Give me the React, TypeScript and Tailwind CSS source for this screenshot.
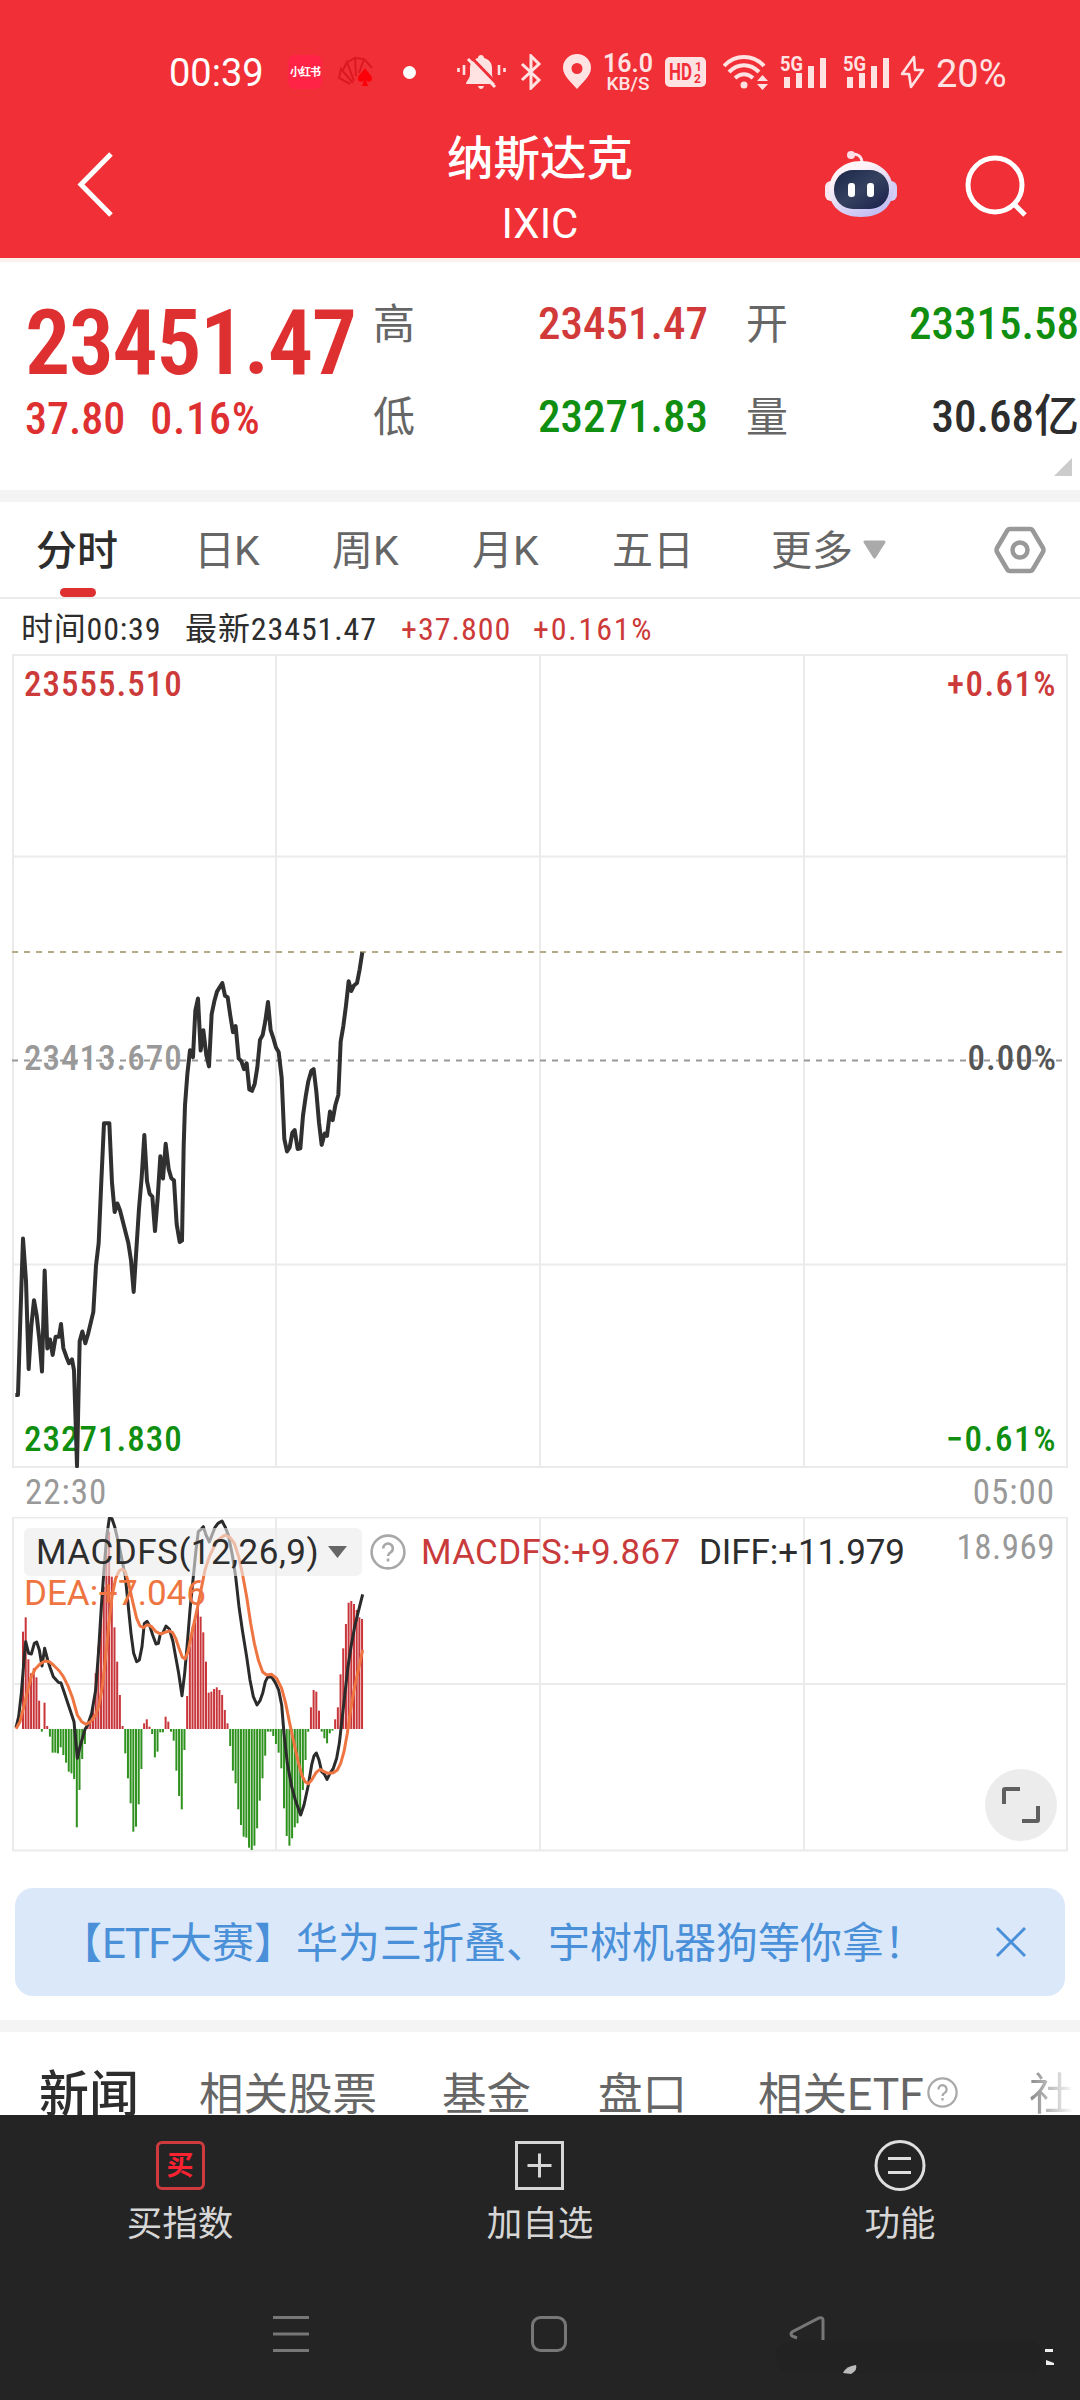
// src/App.tsx
import type { ReactNode } from 'react';
import { clsx } from 'clsx';

// Chart geometry: each series is stored in its own plotting units and scaled by the <g>
const PRICE_LINE =
  '46,1321 54,1321 61,1100 69,867 78,990 86,1246 94,1120 102,1046 110,1090 118,1160 126,1253 134,960 142,1186 150,1160 158,1205 167,1152 177,1152 183,1115 190,1185 199,1210 207,1229 216,1218 222,1250 231,1528 239,1165 247,1137 256,1171 264,1145 280,1080 288,945 296,880 304,700 312,532 328,532 336,705 344,790 352,765 360,785 368,815 385,880 393,930 401,1022 409,900 417,780 425,690 433,566 441,700 449,737 457,745 465,845 473,750 481,628 489,693 497,592 506,665 514,692 522,698 530,825 539,877 546,873 551,600 555,480 562,390 570,320 579,340 586,205 594,170 602,321 610,262 619,335 627,367 635,215 643,178 651,150 667,125 675,162 683,166 691,220 699,268 707,250 716,344 724,352 732,375 740,358 748,434 756,438 764,418 772,370 780,290 788,276 796,235 804,180 812,262 820,285 828,312 836,325 845,400 853,578 861,614 869,602 877,560 884,552 893,607 901,605 909,510 917,455 925,410 934,380 941,375 949,440 957,530 965,595 974,562 981,569 990,498 998,523 1006,480 1015,450 1022,295 1030,250 1038,190 1046,120 1054,148 1062,132 1071,125 1079,85 1087,36';

const DIFF_LINE =
  '48,803 56,770 64,700 72,600 77,545 86,580 94,582 103,550 110,546 118,570 126,618 134,565 143,600 151,625 160,650 175,667 183,669 192,695 207,740 222,785 232,895 240,860 255,808 263,795 275,760 287,690 296,570 304,440 312,330 320,230 328,175 336,176 344,200 358,260 376,350 385,440 393,520 401,580 410,605 418,600 426,560 433,490 441,484 450,500 458,525 468,552 475,550 481,522 489,518 498,498 508,507 519,545 527,590 536,640 546,707 554,640 562,550 570,450 580,350 588,270 595,215 603,208 610,200 618,225 628,246 636,225 645,202 654,190 666,183 675,200 685,225 697,285 707,350 717,440 727,510 740,590 750,660 760,710 771,735 780,722 788,700 796,665 804,650 816,652 826,668 836,690 845,735 852,820 862,910 875,980 886,1020 902,1065 912,1035 925,975 935,915 942,888 949,879 957,900 965,935 973,942 981,958 990,940 1000,925 1010,895 1018,850 1027,770 1036,690 1044,620 1053,560 1064,500 1075,455 1088,403';

const DEA_LINE =
  '48,806 60,785 70,745 82,695 94,650 105,628 120,612 135,603 148,605 160,615 178,633 190,650 205,680 218,715 232,765 245,785 258,793 272,785 287,765 297,735 307,680 317,590 327,490 336,410 347,355 358,332 367,327 376,335 387,375 398,425 410,475 420,498 430,503 442,494 455,500 468,515 482,522 495,517 508,513 518,518 527,535 537,565 547,592 555,597 564,575 572,535 582,490 593,440 603,390 615,330 628,290 643,258 658,237 675,225 690,232 703,250 716,290 728,345 740,410 752,490 763,550 775,600 788,636 800,645 815,643 830,655 845,685 857,730 868,785 880,840 892,895 905,945 915,965 925,971 935,960 948,938 960,928 972,935 985,940 1000,938 1012,930 1022,910 1032,875 1042,820 1052,750 1062,690 1075,630 1088,570';

// MACD histogram, positive above the zero line
const MACD_BARS = [
  292, 335, 209, 167, 182, 155, 85, -8, 79, 9, -23, -71, -71, -73, -55, -78, -101, -128, -133, -150,
  -295, -183, -90, -45, 12, 27, 67, 167, 247, 357, 427, 547, 592, 457, 305, 202, 102, 9, -73, -148,
  -223, -308, -293, -226, -120, 17, 29, 7, -15, -85, -68, -10, -10, 37, 22, -8, -35, -125, -201, -241,
  -63, 99, 247, 307, 337, 367, 337, 290, 202, 109, 112, 120, 125, 117, 102, 57, 17, -51, -125, -163,
  -241, -288, -323, -326, -356, -363, -350, -298, -215, -148, -80, -8, -8, -21, -45, -71, -118, -238, -321, -350,
  -328, -295, -283, -258, -183, -93, -8, 65, 117, 112, 55, -8, -28, -43, -13, -5, 29, 65, 164, 242,
  315, 379, 384, 375, 357, 335, 330
];

const SignalBars = () => (
  <svg className="h-[34px] w-[48px] overflow-visible" viewBox="0 0 48 34" fill="currentColor">
    <text x="0" y="16" fontSize="21" fontWeight="700" textLength="23" lengthAdjust="spacingAndGlyphs">5G</text>
    <rect x="4" y="22" width="6" height="11" />
    <rect x="16" y="18" width="6" height="15" />
    <rect x="28" y="11" width="6" height="22" />
    <rect x="40" y="3" width="6" height="30" />
  </svg>
);

const HelpIcon = ({ className }: { className?: string }) => (
  <svg className={clsx('text-[#a8a8a8]', className)} viewBox="0 0 36 36" fill="none" stroke="currentColor" strokeWidth="2.6">
    <circle cx="18" cy="18" r="16.4" />
    <path d="M13.2 14.4a4.8 4.8 0 1 1 7.4 4c-1.8 1.1-2.6 1.8-2.6 3.6M18 24.4v3" />
  </svg>
);

const StatusBar = () => (
  <div className="flex h-[50px] items-center pl-[169px] text-[#ffe3e3]">
    <span className="w-[119px] pt-[2px] text-[38px] leading-none text-white">00:39</span>
    <div className="flex h-[34px] w-[34px] items-center justify-center rounded-[7px] bg-[#ff2346]">
      <span className="text-[11px] font-bold leading-none tracking-[-1px] text-white">小红书</span>
    </div>
    <svg className="ml-4 h-[32px] w-[36px]" viewBox="0 0 36 32" fill="none" stroke="#dc1820" strokeWidth="2">
      <path d="M12 28 1 22 3 13 15 27M5 14 9 6 16 25M10 6 17 2 18 20M18 2l8 1-5 14M27 4l7 8" />
      <path d="M27 12c-3 5-7 7-7 11 0 3 4 4 6 1l-2 6h6l-2-6c2 3 6 2 6-1 0-4-4-6-7-11Z" fill="#fb0008" stroke="none" />
    </svg>
    <div className="ml-[29px] h-[13px] w-[13px] rounded-full bg-white" />
    <svg className="ml-[41px] h-[36px] w-[49px]" viewBox="0 0 49 36" fill="currentColor">
      <path d="M9 30c0-3 4-5 4-10v-6c0-6 4-9 8-10 0-4 6-4 6 0 4 1 8 4 8 10v6c0 5 4 7 4 10Z" />
      <path d="M21 32h6c-1 4-5 4-6 0Z" />
      <path d="M14 3 41 31" stroke="#f12f37" strokeWidth="3" />
      <path d="M11 5 38 33" stroke="currentColor" strokeWidth="3" />
      <path d="M7 11v10M1.500 14v4M42 11v10M47.500 14v4" stroke="currentColor" strokeWidth="2.600" />
    </svg>
    <svg className="ml-[14px] h-[36px] w-[22px]" viewBox="0 0 22 36" fill="none" stroke="currentColor" strokeWidth="3">
      <path d="M2 10 19 26 11 34V2l8 8L2 26" />
    </svg>
    <svg className="ml-[21px] h-[36px] w-[28px]" viewBox="0 0 28 36" fill="currentColor">
      <path fillRule="evenodd" d="M14 35C9 29 0 22 0 14a14 14 0 0 1 28 0c0 8-9 15-14 21Zm0-15a5.500 5.500 0 1 0 0-11 5.500 5.500 0 0 0 0 11Z" />
    </svg>
    <div className="ml-[13px] flex w-[48px] flex-col items-center pt-[3px] font-medium">
      <span className="text-[25px] font-semibold leading-[20px]">16.0</span>
      <span className="text-[19px] leading-[20px]">KB/S</span>
    </div>
    <svg className="ml-[13px] h-[30px] w-[41px]" viewBox="0 0 41 30">
      <rect width="41" height="30" rx="5" fill="currentColor" />
      <g fill="#f12f37" fontWeight="700">
        <text x="4" y="23" fontSize="23" textLength="23" lengthAdjust="spacingAndGlyphs">HD</text>
        <text x="30" y="14" fontSize="12">1</text>
        <text x="29" y="26" fontSize="12">2</text>
      </g>
    </svg>
    <svg className="ml-[17px] h-[36px] w-[46px]" viewBox="0 0 46 36" fill="none" stroke="currentColor" strokeWidth="4">
      <path d="M1 12c11-12 29-12 40 0M6 18c9-9 21-9 30 0M12 24c6-5 12-5 18 0" />
      <circle cx="21" cy="31" r="3.500" fill="currentColor" stroke="none" />
      <path d="m34 27 5.500-6 5.500 6ZM34 30l5.500 6 5.500-6Z" fill="currentColor" stroke="none" />
    </svg>
    <div className="ml-[11px]"><SignalBars /></div>
    <div className="ml-[15px]"><SignalBars /></div>
    <svg className="ml-[9px] h-[36px] w-[25px]" viewBox="0 0 25 36" fill="none" stroke="currentColor" strokeWidth="2.600" strokeLinejoin="round">
      <path d="M14 3 2 20h7l2 13 12-17h-8Z" />
    </svg>
    <span className="ml-[11px] pt-[4px] text-[38px] leading-none">20%</span>
  </div>
);

const RobotIcon = () => (
  <svg className="h-[68px] w-[74px]" viewBox="0 0 74 68">
    <defs>
      <linearGradient id="shell" x1="0" y1="0" x2="0.6" y2="1">
        <stop offset="0.3" stopColor="#fff4f7" />
        <stop offset="1" stopColor="#c3bff3" />
      </linearGradient>
      <linearGradient id="visor" x1="0" y1="0" x2="1" y2="1">
        <stop offset="0" stopColor="#1b2748" />
        <stop offset="0.5" stopColor="#35415f" />
        <stop offset="1" stopColor="#1a1f4c" />
      </linearGradient>
    </defs>
    <path d="M27 5c6-2 11 1 11 8" fill="none" stroke="#ffe4ea" strokeWidth="3" />
    <circle cx="27" cy="5" r="4" fill="#ffdfe5" />
    <rect x="1" y="31" width="12" height="20" rx="6" fill="#fbe6f0" />
    <rect x="61" y="31" width="12" height="20" rx="6" fill="#d3cdf5" />
    <path d="M37 11C56 11 69 24 69 40S57 67 37 67 5 56 5 40 18 11 37 11Z" fill="url(#shell)" />
    <rect x="10" y="20" width="55" height="39" rx="19" fill="url(#visor)" />
    <rect x="24" y="33" width="7" height="14" rx="3" fill="#fff" />
    <rect x="43" y="33" width="7" height="14" rx="3" fill="#fff" />
  </svg>
);

const Header = () => (
  <header className="h-[262px] border-b-4 border-[#fdf1ee] bg-[#f12f37] pt-[47px] text-white">
    <StatusBar />
    <div className="flex h-[156px] items-start px-[50px] pt-[24px]">
      <svg className="ml-[25px] mt-[30px] h-[68px] w-[40px]" viewBox="0 0 40 68" fill="none" stroke="#fff" strokeWidth="5">
        <path d="M36 3 6 33.500 36 64" />
      </svg>
      <div className="ml-[275px] mt-[8px] flex w-[300px] flex-col items-center">
        <h1 className="text-[46.500px] font-medium leading-[60px]">纳斯达克</h1>
        <span className="mt-[11px] text-[42px] leading-[48px]">IXIC</span>
      </div>
      <div className="ml-[134px] mt-[29px]"><RobotIcon /></div>
      <svg className="ml-[64px] mt-[33px] h-[64px] w-[66px]" viewBox="0 0 66 64" fill="none" stroke="#fff" strokeWidth="5">
        <circle cx="33" cy="31" r="27" />
        <path d="m52 50 11 11" />
      </svg>
    </div>
  </header>
);

const Stat = ({ label, value, color }: { label: string; value: string; color: string }) => (
  <div className="flex h-[60px] items-center justify-between">
    <span className="text-[42px] text-[#666]">{label}</span>
    <span className={clsx('text-[45px] font-medium [font-stretch:75%]', color)}>{value}</span>
  </div>
);

const QuotePanel = () => (
  <section className="flex h-[228px]">
    <div className="w-[373px] shrink-0 pl-[25px] pt-[37px] text-[#de3031]">
      <div className="text-[90px] font-semibold leading-[90px] tracking-[-1.5px] [font-stretch:75%]">23451.47</div>
      <div className="mt-[8px] flex gap-[25px] text-[44px] font-medium leading-[44px] [font-stretch:75%]">
        <span>37.80</span>
        <span className="tracking-[0.8px]">0.16%</span>
      </div>
    </div>
    <div className="flex-1">
      <div className="grid grid-cols-[335px_333px] gap-x-[38px] gap-y-[33px] pt-[32px]">
        <Stat label="高" value="23451.47" color="text-[#d23a3a]" />
        <Stat label="开" value="23315.58" color="text-[#0f8e10]" />
        <Stat label="低" value="23271.83" color="text-[#0f8e10]" />
        <Stat label="量" value="30.68亿" color="text-[#2d2d2d]" />
      </div>
      <div className="ml-auto mr-2 mt-[11px] h-[18px] w-[18px] bg-[#ccc] [clip-path:polygon(100%_0,100%_100%,0_100%)]" />
    </div>
  </section>
);

const PeriodTabs = () => (
  <nav className="flex h-[97px] items-center border-b-2 border-[#ebebeb] pl-[36px] text-[41px] text-[#666]">
    <div className="relative flex h-full w-[158px] items-center pt-[5px] font-medium text-[#2d2d2d]">
      分时
      <span className="absolute bottom-0 left-[24px] h-[9px] w-[36px] rounded-full bg-[#de3031]" />
    </div>
    <span className="w-[138px] pt-[5px] tracking-[-1px]">日K</span>
    <span className="w-[140px] pt-[5px]">周K</span>
    <span className="w-[140px] pt-[5px]">月K</span>
    <span className="w-[159px] pt-[5px]">五日</span>
    <span className="pt-[5px]">更多</span>
    <svg className="ml-[10px] h-[19px] w-[23px]" viewBox="0 0 23 19">
      <path d="M2 2h19L11.500 17Z" fill="#aaa" stroke="#aaa" strokeWidth="3" strokeLinejoin="round" />
    </svg>
    <svg className="ml-[108px] h-[50px] w-[52px]" viewBox="0 0 52 50" fill="none" stroke="#999" strokeWidth="4.500" strokeLinejoin="round">
      <path d="M16 4h20q2 0 3 2l10 17q1 2 0 4L39 44q-1 2-3 2H16q-2 0-3-2L3 27q-1-2 0-4L13 6q1-2 3-2Z" />
      <circle cx="26" cy="25" r="7.500" />
    </svg>
  </nav>
);

const TickerLine = () => (
  <div className="flex h-[55px] items-center pl-[21px] pt-[4px] text-[32px] text-[#2d2d2d] [font-stretch:75%]">
    <span className="w-[164px] tracking-[0.8px]">时间00:39</span>
    <span className="w-[216px] tracking-[0.9px]">最新23451.47</span>
    <span className="w-[132px] tracking-[1px] text-[#cc3a3a]">+37.800</span>
    <span className="tracking-[1.8px] text-[#cc3a3a]">+0.161%</span>
  </div>
);

const PriceChart = () => (
  <div className="relative h-[814px]">
    <svg className="h-full w-full" viewBox="0 0 1080 814" fill="none">
      <path d="M13 1H1067V813H13ZM13 202.500H1067M13 610.500H1067M276 1V813M540 1V813M804 1V813" stroke="#ebebeb" strokeWidth="2" />
      <path d="M12 298H1062" stroke="#b5ab84" strokeWidth="2" strokeDasharray="6 6" />
      <path d="M12 406.500H1062" stroke="#999" strokeWidth="2" strokeDasharray="6 6" />
    </svg>
    <div className="absolute inset-0 flex flex-col justify-between pb-[10px] pl-[24px] pr-[23px] pt-[13px] text-[35px] font-medium leading-[36px] tracking-[1px] [font-stretch:75%]">
      <div className="flex justify-between text-[#cc3a3a]"><span>23555.510</span><span className="tracking-[1.4px]">+0.61%</span></div>
      <div className="-mt-[8px] flex justify-between text-[#999]"><span>23413.670</span><span className="text-[#555]">0.00%</span></div>
      <div className="flex justify-between text-[#0f8e10]"><span>23271.830</span><span className="tracking-[1.6px]">−0.61%</span></div>
    </div>
    <svg className="absolute inset-0 h-full w-full" viewBox="0 0 1080 814" fill="none">
      <g transform="translate(0 286) scale(0.33333 0.34435)">
        <polyline points={PRICE_LINE} stroke="#303030" strokeWidth="4" strokeLinejoin="round" vectorEffect="non-scaling-stroke" />
      </g>
    </svg>
  </div>
);

const MacdChart = () => (
  <div className="relative h-[335px]">
    <svg className="h-full w-full" viewBox="0 0 1080 335" fill="none">
      <path d="M13 0.500H1067V333.500H13ZM13 167H1067M276 1V334M540 1V334M804 1V334" stroke="#ebebeb" strokeWidth="2" />
      <g transform="translate(0 -57) scale(0.33333)">
        {MACD_BARS.map((value, i) => (
          <rect
            key={i}
            x={66 + i * 8.073}
            y={value > 0 ? 807 - value : 807}
            width="6"
            height={Math.abs(value)}
            fill={value > 0 ? '#c8353a' : '#2f921f'}
          />
        ))}
        <polyline points={DIFF_LINE} stroke="#2b2b2b" strokeWidth="9" strokeLinejoin="round" />
        <polyline points={DEA_LINE} stroke="#ee7542" strokeWidth="9" strokeLinejoin="round" />
      </g>
    </svg>
    <div className="absolute inset-x-0 top-[11px] flex h-[48px] items-center pl-[24px] pr-[25px] text-[35px]">
      <div className="flex h-[48px] w-[338px] shrink-0 items-center rounded-[6px] bg-[#ebebeb]/60 pl-[12px] text-[#2d2d2d]">
        <span className="w-[292px] pt-[3px] tracking-[0.5px]">MACDFS(12,26,9)</span>
        <span className="h-[12px] w-[19px] bg-[#666] [clip-path:polygon(0_0,100%_0,50%_100%)]" />
      </div>
      <HelpIcon className="ml-[8px] h-[36px] w-[36px] shrink-0" />
      <span className="ml-[15px] w-[278px] shrink-0 pt-[3px] tracking-[0.3px] text-[#c93b3b]">MACDFS:+9.867</span>
      <span className="pt-[3px] tracking-[-0.1px] text-[#2d2d2d]">DIFF:+11.979</span>
      <span className="-mt-[8px] ml-auto tracking-[0.5px] text-[#999] [font-stretch:75%]">18.969</span>
    </div>
    <span className="absolute left-[24px] top-[57px] text-[35px] leading-[40px] text-[#ee7542]">DEA:+7.046</span>
    <div className="absolute bottom-[11px] right-[23px] flex h-[72px] w-[72px] items-center justify-center rounded-full bg-[#ececec]">
      <svg className="h-[40px] w-[40px]" viewBox="0 0 40 40" fill="none" stroke="#5f5f5f" strokeWidth="4">
        <path d="M3 19V5q0-1 1-1h15M37 21v14q0 1-1 1H21" />
      </svg>
    </div>
  </div>
);

const PromoBanner = () => (
  <div className="mx-[15px] mt-[36px] flex h-[108px] items-center rounded-[18px] bg-[#dbe8fa] pl-[45px] pr-[38px] text-[42px] text-[#4a90d9]">
    <span className="whitespace-nowrap pt-[3px]">【<span className="tracking-[-1.5px]">ETF</span>大赛】华为三折叠、宇树机器狗等你拿！</span>
    <svg className="ml-auto h-[32px] w-[32px] shrink-0" viewBox="0 0 32 32" fill="none" stroke="currentColor" strokeWidth="3">
      <path d="M2 2 30 30M30 2 2 30" />
    </svg>
  </div>
);

const NewsTabs = () => (
  <nav className="flex h-[83px] overflow-hidden whitespace-nowrap pl-[39px] pt-[33px] text-[44.500px] leading-[60px] text-[#666]">
    <span className="w-[160px] shrink-0 text-[50px] font-medium text-[#2d2d2d]">新闻</span>
    <span className="w-[243px] shrink-0">相关股票</span>
    <span className="w-[156px] shrink-0">基金</span>
    <span className="w-[160px] shrink-0">盘口</span>
    <span className="w-[169px] shrink-0">相关ETF</span>
    <HelpIcon className="mt-[12px] h-[31px] w-[31px] shrink-0" />
    <span className="ml-[71px] shrink-0 bg-gradient-to-r from-[#888] to-[#fff] bg-clip-text text-transparent">社</span>
  </nav>
);

const ActionItem = ({ label, children }: { label: string; children: ReactNode }) => (
  <div className="flex flex-1 flex-col items-center pt-[24px]">
    {children}
    <span className="mt-[11px] text-[35.500px] leading-[44px] text-[#d6d6d6]">{label}</span>
  </div>
);

const BottomBar = () => (
  <footer className="h-[285px] bg-[#242424]">
    <div className="flex h-[170px]">
      <ActionItem label="买指数">
        <div className="flex h-[52px] items-center">
          <div className="flex h-[49px] w-[49px] items-center justify-center rounded-[6px] border-[3px] border-[#cf3a3f] pt-[2px] text-[27px] font-bold leading-none text-[#fb2232]">买</div>
        </div>
      </ActionItem>
      <ActionItem label="加自选">
        <svg className="h-[52px] w-[52px]" viewBox="0 0 52 52" fill="none" stroke="#d6d6d6" strokeWidth="3">
          <path d="M2.500 3.500H48.500V49.500H2.500ZM25.500 14.500V38.500M13.500 26.500H37.500" />
        </svg>
      </ActionItem>
      <ActionItem label="功能">
        <svg className="h-[52px] w-[52px]" viewBox="0 0 52 52" fill="none" stroke="#dedede" strokeWidth="3">
          <circle cx="26" cy="26.500" r="24" />
          <path d="M14 19.500H37M14 33.500H37" />
        </svg>
      </ActionItem>
    </div>
    {/* system navigation keys */}
    <svg className="h-[115px] w-full" viewBox="0 0 1080 115" fill="none" stroke="#777" strokeWidth="3">
      <path d="M273 32.500H309M273 49H309M273 65.500H309" />
      <rect x="532.500" y="32.500" width="33" height="33" rx="8" />
      <path d="M797 53 792 51q-2-2 0-4L819 33q4-1 4 2V55" />
      <g stroke="none">
        <path d="M790 56h240q12 2 12 16t-12 16H790q-14-2-14-16t14-16Z" fill="#222" />
        <path d="M843 88q3-7 13-8 2 5-5 9Z" fill="#bbb" />
        <path d="M1045 64h8v3h-8ZM1046 75l8 3v2h-8Z" fill="#eee" />
      </g>
    </svg>
  </footer>
);

export const App = () => {
  return (
    <div className="flex h-[2400px] w-[1080px] flex-col overflow-hidden bg-white [font-family:Roboto,'Noto_Sans_CJK_SC',sans-serif]">
      <Header />
      <QuotePanel />
      <div className="h-[12px] bg-[#f4f4f4]" />
      <PeriodTabs />
      <TickerLine />
      <PriceChart />
      <div className="flex h-[49px] items-center justify-between px-[25px] pt-[2px] text-[35px] tracking-[1px] text-[#999] [font-stretch:75%]">
        <span>22:30</span>
        <span>05:00</span>
      </div>
      <MacdChart />
      <PromoBanner />
      <div className="mt-[24px] h-[12px] shrink-0 bg-[#f4f4f4]" />
      <NewsTabs />
      <BottomBar />
    </div>
  );
};

export default App;
